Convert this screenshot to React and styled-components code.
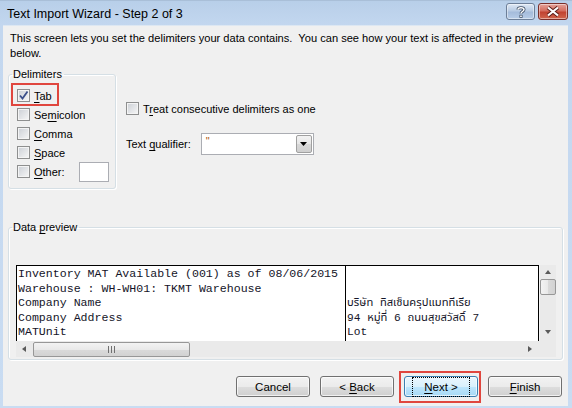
import React from "react";
import styled, { createGlobalStyle } from "styled-components";

const GlobalStyle = createGlobalStyle`
  html, body {
    margin: 0;
    padding: 0;
    background: #fff;
  }
  * {
    box-sizing: border-box;
  }
`;

const ui = `"Liberation Sans", Arial, sans-serif`;

const Window = styled.div`
  width: 572px;
  height: 408px;
  display: flex;
  flex-direction: column;
  padding: 0 4px 2px 3px;
  background: linear-gradient(180deg, #b8cfe9 0px, #c3d7ef 25px, #c9dcf2 100%);
  border-top: 1px solid #a9bfd8;
  font-family: ${ui};
  font-size: 11px;
  color: #000;
  overflow: hidden;
`;

const TitleBar = styled.div`
  height: 24px;
  flex: none;
  display: flex;
  align-items: flex-start;
  padding: 2px 0 0 4px;
`;

const Title = styled.div`
  flex: 1;
  font-size: 12.5px;
  line-height: 22px;
  color: #000;
`;

const CaptionButton = styled.div`
  width: ${(p) => p.w}px;
  height: 17px;
  margin-left: ${(p) => p.gap}px;
  border: 1px solid ${(p) => (p.danger ? "#7a2f2a" : "#6d7f98")};
  border-radius: 3px;
  display: flex;
  align-items: center;
  justify-content: center;
  background: ${(p) =>
    p.danger
      ? "linear-gradient(180deg, #e4a39a 0%, #d46e5f 45%, #c14331 55%, #d0664d 100%)"
      : "linear-gradient(180deg, #dfe9f5 0%, #b8cbe3 45%, #a5bcdb 55%, #b7cde7 100%)"};
  box-shadow: inset 0 0 0 1px rgba(255, 255, 255, 0.45);
`;

const Client = styled.div`
  flex: 1;
  display: flex;
  flex-direction: column;
  background: #f0f0f0;
  border-top: 1px solid #dde7f2;
  padding: 5px 5px 0 5px;
`;

const Intro = styled.p`
  margin: 0 0 0 2px;
  line-height: 15px;
  font-size: 11.1px;
  white-space: nowrap;
`;

const TopArea = styled.div`
  display: flex;
  margin-top: 6px;
  height: 120px;
`;

const Group = styled.fieldset`
  margin: 0;
  padding: 0;
  min-width: 0;
  border: 1px solid #d5dfe5;
  border-radius: 3px;
  box-shadow: inset 1px 1px 0 #fff, 1px 1px 0 #fff;
  width: ${(p) => p.w}px;
  height: ${(p) => p.h}px;
  display: flex;
  flex-direction: column;
`;

const Legend = styled.legend`
  padding: 0 2px 0 1px;
  margin-left: 3px;
  line-height: 14px;
`;

const CheckList = styled.div`
  display: flex;
  flex-direction: column;
  padding: 8px 0 0 8px;
  gap: 6px;
`;

const CheckRow = styled.label`
  display: flex;
  align-items: center;
  height: 13px;
  gap: 4px;
  position: relative;
`;

const Highlight = styled.span`
  position: absolute;
  left: ${(p) => p.l}px;
  top: ${(p) => p.t}px;
  width: ${(p) => p.w}px;
  height: ${(p) => p.h}px;
  border: 2px solid #e0463e;
  pointer-events: none;
`;

const Box = styled.span`
  width: 13px;
  height: 13px;
  flex: none;
  border: 1px solid #8e8f8f;
  box-shadow: inset 0 0 0 1px #f4f4f4;
  background: linear-gradient(135deg, #cbcfd5 0%, #f7f7f7 100%);
  display: flex;
  align-items: center;
  justify-content: center;
`;

const U = styled.span`
  text-decoration: underline;
  text-underline-offset: 2px;
`;

const OtherInput = styled.span`
  width: 30px;
  height: 20px;
  margin-left: ${(p) => p.ml}px;
  background: #fff;
  border: 1px solid #abadb3;
`;

const Options = styled.div`
  display: flex;
  flex-direction: column;
  padding: 35px 0 0 10px;
`;

const QualifierRow = styled.div`
  display: flex;
  align-items: center;
  margin-top: 18px;
`;

const Combo = styled.div`
  width: 113px;
  height: 22px;
  margin-left: 10px;
  background: #fff;
  border: 1px solid #abadb3;
  display: flex;
  align-items: stretch;
`;

const ComboValue = styled.div`
  flex: 1;
  padding: 1px 0 0 4px;
  font-size: 11px;
  color: #b05a10;
`;

const ComboButton = styled.div`
  width: 16px;
  margin: 1px;
  border: 1px solid #a0a0a0;
  border-radius: 2px;
  background: linear-gradient(180deg, #f2f2f2 0%, #e6e6e6 50%, #d8d8d8 51%, #cfcfcf 100%);
  display: flex;
  align-items: center;
  justify-content: center;
`;

const PreviewWrap = styled.div`
  margin-top: 33px;
`;

const PreviewBody = styled.div`
  display: grid;
  grid-template-columns: 523px 17px;
  grid-template-rows: 76px 16px;
  margin: 31px 0 0 7px;
`;

const Sheet = styled.div`
  background: #fff;
  border: 1px solid #000;
  border-bottom: none;
  display: grid;
  grid-template-columns: 329px 1fr;
  overflow: hidden;
`;

const Column = styled.div`
  padding: 1px 0 0 1px;
  border-right: ${(p) => (p.divider ? "1px solid #000" : "none")};
  font-family: "Liberation Mono", "Courier New", monospace;
  font-size: 11.6px;
  line-height: 14.5px;
  color: #141428;
  white-space: pre;
`;

const ThaiColumn = styled(Column)`
  font-family: "Liberation Mono", "Noto Sans Thai", Tahoma, "DejaVu Sans", sans-serif;
  font-size: 11.2px;
`;

const Line = styled.div`
  height: 14.5px;
`;

const VScroll = styled.div`
  background: #eaeaea;
  border-left: 1px solid #f4f4f4;
  display: flex;
  flex-direction: column;
  align-items: center;
  padding: 5px 0 7px;
`;

const Thumb = styled.div`
  width: ${(p) => p.w}px;
  height: ${(p) => p.h}px;
  margin-top: ${(p) => p.mt || 0}px;
  border: 1px solid #979797;
  border-radius: 2px;
  background: linear-gradient(${(p) => (p.horizontal ? "180deg" : "90deg")}, #f3f3f3 0%, #e9e9e9 50%, #dadada 51%, #d2d2d2 100%);
  display: flex;
  align-items: center;
  justify-content: center;
  flex: none;
`;

const Spacer = styled.div`
  flex: 1;
`;

const HScroll = styled.div`
  background: #eaeaea;
  display: flex;
  align-items: center;
  padding: 0 7px 0 6px;
  gap: 7px;
`;

const Corner = styled.div`
  background: #eaeaea;
`;

const Grip = styled.span`
  width: 1px;
  height: 7px;
  background: #6f6f6f;
  margin: 0 1px;
`;

const ButtonRow = styled.div`
  display: flex;
  justify-content: flex-end;
  gap: 10px;
  margin-top: 16px;
  padding-right: 1px;
`;

const Button = styled.div`
  position: relative;
  width: 74px;
  height: 21px;
  border: 1px solid ${(p) => (p.focused ? "#3c7fb1" : "#707070")};
  border-radius: 3px;
  background: ${(p) =>
    p.focused
      ? "linear-gradient(180deg, #eaf6fd 0%, #d9f0fc 50%, #bee6fd 51%, #a7d9f5 100%)"
      : "linear-gradient(180deg, #f2f2f2 0%, #ebebeb 50%, #dddddd 51%, #cfcfcf 100%)"};
  box-shadow: inset 0 0 0 1px rgba(255, 255, 255, 0.7);
  display: flex;
  align-items: center;
  justify-content: center;
  font-size: 11.5px;
  line-height: 14px;
  white-space: pre;
`;

const FocusText = styled.span`
  outline: 1px dotted #000;
  outline-offset: 2px;
  padding: 0 9px;
`;

const Arrow = ({ dir }) => {
  const pts = {
    up: "0,4 3,0 6,4",
    down: "0,0 6,0 3,4",
    left: "4,0 4,6 0,3",
    right: "0,0 0,6 4,3",
  }[dir];
  const horiz = dir === "left" || dir === "right";
  return (
    <svg width={horiz ? 4 : 6} height={horiz ? 6 : 4} viewBox={horiz ? "0 0 4 6" : "0 0 6 4"}>
      <polygon points={pts} fill="#5a5a5a" />
    </svg>
  );
};

const Check = ({ checked }) => (
  <Box>
    {checked && (
      <svg width="11" height="11" viewBox="0 0 11 11">
        <path d="M2 5.5 L4.5 8.5 L9.5 1.5" fill="none" stroke="#3b4f8a" strokeWidth="1.8" />
      </svg>
    )}
  </Box>
);

const delimiters = [
  { pre: "", u: "T", post: "ab", checked: true },
  { pre: "Se", u: "m", post: "icolon" },
  { pre: "", u: "C", post: "omma" },
  { pre: "", u: "S", post: "pace" },
  { pre: "", u: "O", post: "ther:", other: true },
];

const col1 = [
  "Inventory MAT Available (001) as of 08/06/2015",
  "Warehouse : WH-WH01: TKMT Warehouse",
  "Company Name",
  "Company Address",
  "MATUnit",
];

const col2 = ["", "", "บริษัท ทิสเซ็นครุปแมททีเรีย", "94 หมู่ที่ 6 ถนนสุขสวัสดิ์ 7", "Lot"];

export default function App() {
  return (
    <>
      <GlobalStyle />
      <Window>
        <TitleBar>
          <Title>Text Import Wizard - Step 2 of 3</Title>
          <CaptionButton w={29} gap={0}>
            <svg width="10" height="12" viewBox="0 0 10 12">
              <path d="M2 3.5 C2 1 8 1 8 3.5 C8 5.5 5 5.5 5 7.5" fill="none" stroke="#3a4a60" strokeWidth="3" />
              <path d="M2 3.5 C2 1 8 1 8 3.5 C8 5.5 5 5.5 5 7.5" fill="none" stroke="#fff" strokeWidth="1.5" />
              <rect x="3.5" y="8.8" width="3" height="3" fill="#3a4a60" />
              <rect x="4.2" y="9.5" width="1.6" height="1.6" fill="#fff" />
            </svg>
          </CaptionButton>
          <CaptionButton w={30} gap={3} danger>
            <svg width="14" height="11" viewBox="0 0 14 11">
              <path d="M2 1.5 L12 9.5 M12 1.5 L2 9.5" stroke="#5a1d18" strokeWidth="4" />
              <path d="M2 1.5 L12 9.5 M12 1.5 L2 9.5" stroke="#fff" strokeWidth="2.2" />
            </svg>
          </CaptionButton>
        </TitleBar>
        <Client>
          <Intro>
            This screen lets you set the delimiters your data contains.&nbsp; You can see how your text is
            affected in the preview
            <br />
            below.
          </Intro>
          <TopArea>
            <Group w={108} h={122}>
              <Legend>Delimiters</Legend>
              <CheckList>
                {delimiters.map((d) => (
                  <CheckRow key={d.u + d.post}>
                    <Check checked={d.checked} />
                    <span>
                      {d.pre}
                      <U>{d.u}</U>
                      {d.post}
                    </span>
                    {d.other && <OtherInput ml={10} />}
                    {d.checked && <Highlight l={-6} t={-6} w={48} h={23} />}
                  </CheckRow>
                ))}
              </CheckList>
            </Group>
            <Options>
              <CheckRow>
                <Check />
                <span>
                  T<U>r</U>eat consecutive delimiters as one
                </span>
              </CheckRow>
              <QualifierRow>
                <span>
                  Text <U>q</U>ualifier:
                </span>
                <Combo>
                  <ComboValue>"</ComboValue>
                  <ComboButton>
                    <svg width="7" height="4" viewBox="0 0 7 4">
                      <polygon points="0,0 7,0 3.5,4" fill="#000" />
                    </svg>
                  </ComboButton>
                </Combo>
              </QualifierRow>
            </Options>
          </TopArea>
          <PreviewWrap>
            <Group w={555} h={140}>
              <Legend>
                Data <U>p</U>review
              </Legend>
              <PreviewBody>
                <Sheet>
                  <Column divider>
                    {col1.map((t, i) => (
                      <Line key={i}>{t}</Line>
                    ))}
                  </Column>
                  <ThaiColumn>
                    {col2.map((t, i) => (
                      <Line key={i}>{t}</Line>
                    ))}
                  </ThaiColumn>
                </Sheet>
                <VScroll>
                  <Arrow dir="up" />
                  <Thumb w={16} h={16} mt={5} />
                  <Spacer />
                  <Arrow dir="down" />
                </VScroll>
                <HScroll>
                  <Arrow dir="left" />
                  <Thumb horizontal w={157} h={15}>
                    <Grip />
                    <Grip />
                    <Grip />
                  </Thumb>
                  <Spacer />
                  <Arrow dir="right" />
                </HScroll>
                <Corner />
              </PreviewBody>
            </Group>
          </PreviewWrap>
          <ButtonRow>
            <Button>Cancel</Button>
            <Button>
              {"< "}
              <U>B</U>ack
            </Button>
            <Button focused>
              <FocusText>
                <U>N</U>
                {"ext >"}
              </FocusText>
              <Highlight l={-6} t={-6} w={82} h={32} />
            </Button>
            <Button>
              <U>F</U>inish
            </Button>
          </ButtonRow>
        </Client>
      </Window>
    </>
  );
}
